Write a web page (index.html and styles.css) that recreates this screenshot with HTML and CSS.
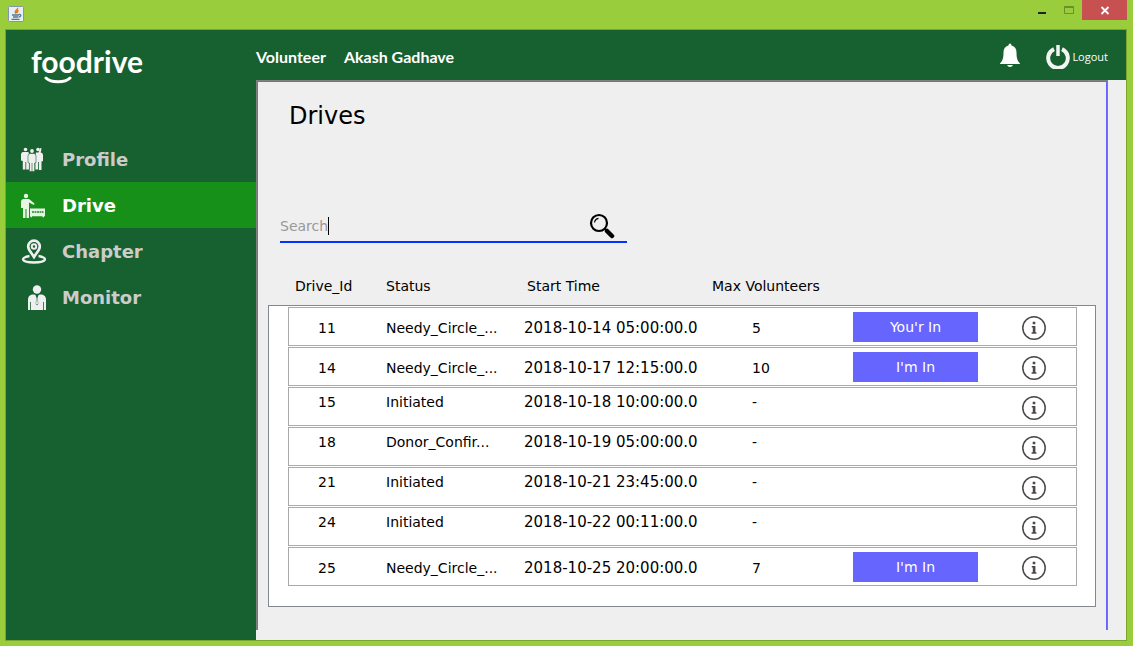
FILE: index.html
```html
<!DOCTYPE html>
<html lang="en">
<head>
<meta charset="utf-8">
<title>foodrive</title>
<link rel="stylesheet" href="styles.css">
</head>
<body>
<div class="titlebar">
  <svg class="app-icon" viewBox="0 0 16 16" aria-hidden="true">
    <rect x=".5" y=".5" width="15" height="15" rx="1" fill="#e9eef3" stroke="#8496ab"/>
    <path d="M9.500 2c1 1.500-4 2.500-1.500 5.500M10.500 4.300c-2 1-1.500 1.800-1 3" fill="none" stroke="#e8791c" stroke-width="1.600"/>
    <path d="M4 9h7M5 11h5M3.500 13.300h8M11 8.500c3-.5 2 2.500-.5 2.500" fill="none" stroke="#4f7797" stroke-width="1.300"/>
  </svg>
  <div class="window-buttons">
    <button class="win-btn" aria-label="Minimize"><svg viewBox="0 0 27 20"><path d="M10 12h8v2h-8z" fill="#222"/></svg></button>
    <button class="win-btn" aria-label="Maximize"><svg viewBox="0 0 27 20"><path d="M9.500 6.500h9v7h-9zM9.500 7.500h9" fill="none" stroke="#6b8f2a"/></svg></button>
    <button class="win-btn win-close" aria-label="Close"><svg viewBox="0 0 45 20"><path d="M19.500 7l7 7M26.500 7l-7 7" stroke="#fff" stroke-width="1.800"/></svg></button>
  </div>
</div>
<div class="app">
  <aside class="sidebar">
    <div class="logo">
      <span>foodrive</span>
      <svg class="smile" viewBox="0 0 28 8" aria-hidden="true"><path d="M2 2c5 5 19 5 24 0" fill="none" stroke="#fff" stroke-width="3" stroke-linecap="round"/></svg>
    </div>
    <nav class="menu">
      <a class="menu-item" href="#profile">
        <svg viewBox="0 0 26 26" fill="#efefef" aria-hidden="true">
          <circle cx="5.500" cy="2.500" r="1.800"/><circle cx="18" cy="2.500" r="1.800"/><circle cx="12" cy="4" r="1.900"/>
          <path d="M3 5h5q1 .3 1 2v15.500H6.200V15h-.8v7.500H2.800V14L1 13.500V7.500Q1 5.300 3 5z"/>
          <path d="M16 5.500h2.600L20 1l1.600.4-.9 4.100q2.300.3 2.300 2.500v6l-1.500.5v8.500h-2.600V15h-.8v7.500h-2.800V8z"/>
          <path d="M10 6.500h4q2 .3 2 2.500v6.500l-1.300.5v8.500H9.400V16L8 15.500V9q0-2.200 2-2.500z" stroke="#176131" stroke-width=".6"/>
          <path d="M12 16v8" stroke="#176131" stroke-width=".6"/>
        </svg>
        <span>Profile</span>
      </a>
      <a class="menu-item active" href="#drive" aria-current="page">
        <svg viewBox="0 0 26 26" fill="#e8f5e5" aria-hidden="true">
          <circle cx="6" cy="3" r="2.200"/>
          <path d="M3 6h6l5.500 4.500-.5 1.500-5-2.500V25H6.500v-9h-1v9H3V15H1V8.500q0-2 2-2.500z"/>
          <path d="M10 15.500h15v7.700h-1v1h-1.500v-1H12v1h-1.500v-1H10z"/>
          <path d="M12 19h11.500" stroke="#17901a" stroke-width="1.600" stroke-dasharray="2 .5"/>
        </svg>
        <span>Drive</span>
      </a>
      <a class="menu-item" href="#chapter">
        <svg viewBox="0 0 26 26" fill="none" stroke="#efefef" aria-hidden="true">
          <path d="M14 18c-3-5-5.800-7-5.800-10.500a5.800 5.800 0 0 1 11.600 0c0 3.500-2.800 5.500-5.800 10.500z" stroke-width="2.700"/>
          <circle cx="14" cy="7.500" r="2.200" stroke-width="2"/>
          <path d="M9.500 17c-9.500 1.500-9 6.500 4.500 6.500s14-5 4.500-6.500" stroke-width="2.300"/>
        </svg>
        <span>Chapter</span>
      </a>
      <a class="menu-item" href="#monitor">
        <svg viewBox="0 0 26 26" fill="#efefef" aria-hidden="true">
          <circle cx="17" cy="4.500" r="4.200"/>
          <path d="M12 9.500h2.500l2.500 2 2.500-2H22q4 1 4 5V25H24v-8h-.8v8H10.800v-8h-.8v8H8V14.500q0-4 4-5z"/>
          <path d="M15.700 10.500h2.600l-.6 2 .6 6-1.300 2-1.300-2 .6-6z" fill="#176131"/>
          <path d="M16.600 12.500h.8l.5 5.800-.9 1.300-.9-1.300z"/>
        </svg>
        <span>Monitor</span>
      </a>
    </nav>
  </aside>
  <div class="content">
    <header class="topbar">
      <span class="role">Volunteer</span>
      <span class="user">Akash Gadhave</span>
      <div class="actions">
        <button class="icon-button" aria-label="Notifications">
          <svg class="bell" viewBox="0 0 20 24" fill="#fff"><path d="M8.500 2.500q0-2 1.500-2t1.500 2c3.500 1 5 3.500 5 7 0 6 1 8.500 3.500 11V21H0v-.5c2.500-2.500 3.500-5 3.500-11 0-3.500 1.500-6 5-7zM7 22h6q-1 2-3 2t-3-2z"/></svg>
        </button>
        <button class="icon-button logout">
          <svg class="power" viewBox="0 0 24 24" fill="none" stroke="#f4f4f4" aria-hidden="true"><path d="M8 4.200a9.800 9.800 0 1 0 8 0" stroke-width="4"/><path d="M12 0v11" stroke-width="3.500"/></svg>
          <span>Logout</span>
        </button>
      </div>
    </header>
    <main class="panel">
      <div class="panel-body">
        <h1>Drives</h1>
        <form class="search">
          <input type="text" placeholder="Search" aria-label="Search drives">
          <span class="caret"></span>
          <button class="icon-button search-button" type="button" aria-label="Search">
            <svg viewBox="0 0 26 26" fill="none" stroke="#000"><circle cx="10" cy="10" r="8" stroke-width="2.200"/><path d="M5.500 9.500q.5-3.500 4-4.200" stroke-width="1.200"/><path d="M15.500 15.500l3 3" stroke-width="1.500"/><path d="M18 18l5 5" stroke-width="4.500" stroke-linecap="round"/></svg>
          </button>
        </form>
        <table class="drives">
          <thead>
            <tr><th>Drive_Id</th><th>Status</th><th>Start Time</th><th>Max Volunteers</th></tr>
          </thead>
          <tbody>
            <tr class="open"><td>11</td><td>Needy_Circle_...</td><td class="time">2018-10-14 05:00:00.0</td><td>5</td><td><button class="join">You'r In</button></td><td><button class="info" aria-label="Details of drive 11"><svg viewBox="0 0 24 24"><use href="#info"/></svg></button></td></tr>
            <tr class="open"><td>14</td><td>Needy_Circle_...</td><td class="time">2018-10-17 12:15:00.0</td><td>10</td><td><button class="join">I'm In</button></td><td><button class="info" aria-label="Details of drive 14"><svg viewBox="0 0 24 24"><use href="#info"/></svg></button></td></tr>
            <tr><td>15</td><td>Initiated</td><td class="time">2018-10-18 10:00:00.0</td><td>-</td><td></td><td><button class="info" aria-label="Details of drive 15"><svg viewBox="0 0 24 24"><use href="#info"/></svg></button></td></tr>
            <tr><td>18</td><td>Donor_Confir...</td><td class="time">2018-10-19 05:00:00.0</td><td>-</td><td></td><td><button class="info" aria-label="Details of drive 18"><svg viewBox="0 0 24 24"><use href="#info"/></svg></button></td></tr>
            <tr><td>21</td><td>Initiated</td><td class="time">2018-10-21 23:45:00.0</td><td>-</td><td></td><td><button class="info" aria-label="Details of drive 21"><svg viewBox="0 0 24 24"><use href="#info"/></svg></button></td></tr>
            <tr><td>24</td><td>Initiated</td><td class="time">2018-10-22 00:11:00.0</td><td>-</td><td></td><td><button class="info" aria-label="Details of drive 24"><svg viewBox="0 0 24 24"><use href="#info"/></svg></button></td></tr>
            <tr class="open"><td>25</td><td>Needy_Circle_...</td><td class="time">2018-10-25 20:00:00.0</td><td>7</td><td><button class="join">I'm In</button></td><td><button class="info" aria-label="Details of drive 25"><svg viewBox="0 0 24 24"><use href="#info"/></svg></button></td></tr>
          </tbody>
        </table>
      </div>
    </main>
  </div>
</div>
<svg class="symbols" aria-hidden="true">
  <symbol id="info" viewBox="0 0 24 24">
    <circle cx="12" cy="12" r="11.200" fill="none" stroke="#4d4848" stroke-width="1.500"/>
    <path d="M10.700 5.800h2.600v2.400h-2.600zM9.800 10h3.600v6.200h1v1.600H9.600v-1.600h1.200v-4.600h-1z" fill="#4d4848"/>
  </symbol>
</svg>
</body>
</html>
```
FILE: styles.css
```css
* {
  box-sizing: border-box;
}

body {
  margin: 0;
  min-height: 100vh;
  display: flex;
  flex-direction: column;
  background: #9acd3c;
  color: #000;
  font: 14px/18px "DejaVu Sans", sans-serif;
}

button {
  padding: 0;
  border: 0;
  background: none;
  font: inherit;
  cursor: pointer;
}

svg {
  display: block;
}

.symbols {
  position: absolute;
  width: 0;
  height: 0;
}

.titlebar {
  height: 29px;
  padding: 0 6px 0 8px;
  display: flex;
  justify-content: space-between;
  align-items: flex-start;
}

.app-icon {
  width: 16px;
  height: 16px;
  margin-top: 6px;
}

.window-buttons {
  display: flex;
}

.win-btn {
  width: 27px;
  height: 20px;
}

.win-close {
  width: 45px;
  background: #c75050;
}

.app {
  flex: 1;
  display: flex;
  margin: 0 6px 5px 5px;
  border: 1px solid #7ba430;
  background: #efefef;
}

.sidebar {
  flex: 0 0 250px;
  background: #176131;
}

.logo {
  height: 106px;
  padding: 12px 0 0 25px;
  color: #fff;
  font: bold 30px/38px Lato, sans-serif;
}

.smile {
  width: 28px;
  height: 8px;
  margin: -4px 0 0 13px;
}

.menu-item {
  display: flex;
  align-items: center;
  gap: 16px;
  height: 46px;
  padding: 2px 0 0 14px;
  color: #ccc;
  font-size: 18px;
  font-weight: bold;
  text-decoration: none;
}

.menu-item svg {
  width: 26px;
  height: 26px;
}

.menu-item.active {
  background: #17901a;
  color: #fff;
}

.content {
  flex: 1;
  min-width: 0;
  display: flex;
  flex-direction: column;
}

.topbar {
  height: 50px;
  padding-right: 18px;
  display: flex;
  align-items: center;
  gap: 18px;
  background: #176131;
  color: #fff;
}

.role,
.user {
  padding-top: 4px;
  font: bold 16px/24px Lato, sans-serif;
}

.actions {
  display: flex;
  align-items: center;
  gap: 26px;
  margin-left: auto;
}

.icon-button {
  color: inherit;
}

.bell {
  width: 20px;
  height: 24px;
}

.logout {
  display: flex;
  align-items: center;
  gap: 2px;
  padding-top: 4px;
  font-family: "Open Sans", sans-serif;
  font-size: 11px;
}

.power {
  width: 24px;
  height: 24px;
}

.panel {
  flex: 1;
  display: flex;
  margin: 0 18px 10px 0;
  border: solid #808080;
  border-width: 1px 1px 0;
}

.panel-body {
  flex: 1;
  min-width: 0;
  padding: 19px 10px 22px;
  border: solid #6666ff;
  border-width: 1px 1px 0;
}

h1 {
  margin: 0 0 80px 21px;
  font-size: 24px;
  line-height: 30px;
  font-weight: normal;
}

.search {
  display: flex;
  align-items: center;
  width: 347px;
  height: 32px;
  margin: 0 0 34px 12px;
  border-bottom: 2px solid #0033ff;
}

.search input {
  field-sizing: content;
  padding: 0;
  border: 0;
  outline: 0;
  background: none;
  font: inherit;
}

.search input::placeholder {
  color: #999;
  opacity: 1;
}

.caret {
  width: 1px;
  height: 18px;
  background: #000;
}

.search-button {
  margin: 0 12px 0 auto;
}

.search-button svg {
  width: 26px;
  height: 26px;
}

.drives,
.drives thead,
.drives tbody {
  display: block;
}

.drives tr {
  display: grid;
}

.drives th {
  font-weight: normal;
  text-align: left;
  padding: 0;
}

.drives thead tr {
  grid-template-columns: 91fr 141fr 185fr 384fr;
  padding: 0 0 10px 27px;
}

.drives tbody {
  display: grid;
  gap: 1px;
  padding: 1px 18px 20px 19px;
  border: 1px solid #828790;
  background: #fff;
}

.drives tbody tr {
  grid-template-columns: 97fr 138fr 228fr 101fr 125fr 98fr;
  height: 39px;
  border: 1px solid #a9a9a9;
}

.drives td {
  padding: 5px 0 0;
  white-space: nowrap;
}

.drives .time {
  font-size: 15px;
}

.drives .open td {
  padding-top: 11px;
}

.drives td:first-child {
  padding-left: 29px;
}

.drives td:nth-child(n+5),
.drives .open td:nth-child(n+5) {
  padding-top: 4px;
}

.join {
  display: block;
  width: 100%;
  height: 30px;
  background: #6666ff;
  color: #fff;
}

.info {
  display: block;
  margin: 4px auto 0;
  padding-left: 14px;
}

.info svg {
  width: 24px;
  height: 24px;
}
```
